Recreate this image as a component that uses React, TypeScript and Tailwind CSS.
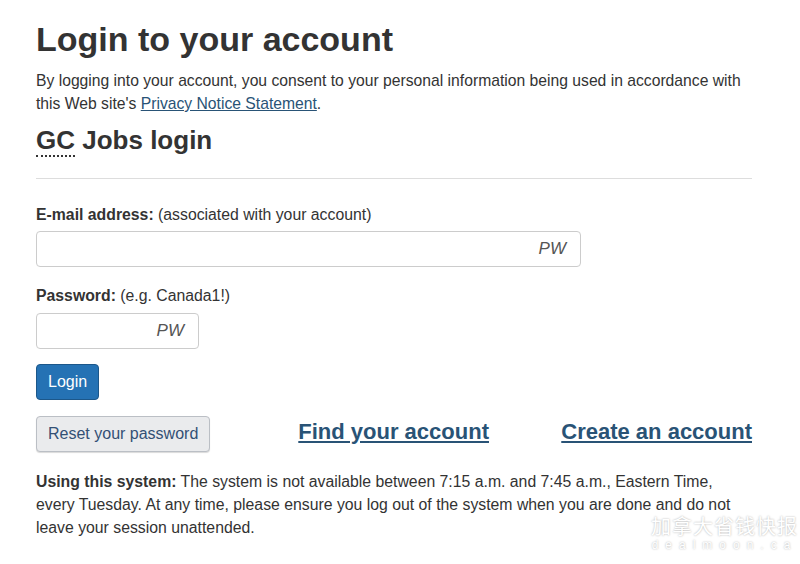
export default function App() {
  return (
    <div className="relative min-h-[564px] bg-white font-['Liberation_Sans',Arial,sans-serif] text-[#333]">
      <div className="w-[752px] pl-[36px] pt-[18px]">
        <h1 className="text-[34px] font-bold leading-[42px] text-[#333]">Login to your account</h1>
        <p className="mt-[9px] text-[15.7px] leading-[23px]">
          By logging into your account, you consent to your personal information being used in accordance with
          this Web site's{" "}
          <a href="#" className="text-[#295376] underline">
            Privacy Notice Statement
          </a>
          .
        </p>
        <h2 className="mt-[8px] text-[26px] font-bold leading-[34px]">
          <abbr className="border-b-2 border-dotted border-[#333] no-underline" title="Government of Canada">
            GC
          </abbr>{" "}
          Jobs login
        </h2>
        <hr className="mt-[21px] border-t border-[#ddd]" />

        <label className="mt-[24px] block text-[15.8px] leading-[23px]">
          <span className="font-bold">E-mail address:</span> (associated with your account)
        </label>
        <div className="mt-[5px] flex h-[36px] w-[545px] items-center justify-end rounded border border-[#ccc] pr-[14px]">
          <span className="text-[17px] italic text-[#555]">PW</span>
        </div>

        <label className="mt-[17px] block text-[15.8px] leading-[23px]">
          <span className="font-bold">Password:</span> (e.g. Canada1!)
        </label>
        <div className="mt-[6px] flex h-[36px] w-[163px] items-center justify-end rounded border border-[#ccc] pr-[14px]">
          <span className="text-[17px] italic text-[#555]">PW</span>
        </div>

        <button className="mt-[15px] block h-[36px] rounded border border-[#1c578a] bg-[#2572b4] px-[11px] text-[16px] text-white">
          Login
        </button>

        <div className="mt-[16px] flex items-center">
          <button className="h-[36px] rounded border border-[#bbbfc5] bg-[#eaebed] px-[11px] text-[16px] text-[#335075] shadow-[0_1px_1px_rgba(0,0,0,0.15)]">
            Reset your password
          </button>
          <a href="#" className="mb-[4px] ml-[88px] text-[22px] font-bold leading-[30px] text-[#295376] underline">
            Find your account
          </a>
          <a href="#" className="mb-[4px] ml-auto text-[22px] font-bold leading-[30px] text-[#295376] underline">
            Create an account
          </a>
        </div>

        <p className="mt-[18px] text-[15.8px] leading-[23px]">
          <strong>Using this system:</strong> The system is not available between 7:15 a.m. and 7:45 a.m., Eastern Time,
          every Tuesday. At any time, please ensure you log out of the system when you are done and do not
          leave your session unattended.
        </p>
      </div>

      <div className="absolute right-[2px] top-[514px] flex flex-col items-center text-white [text-shadow:0_0_2px_#aaa]">
        <span className="font-['Noto_Sans_CJK_SC',sans-serif] text-[20px] leading-[24px] tracking-[1px]">加拿大省钱快报</span>
        <span className="text-[12px] leading-[14px] tracking-[7px]">dealmoon.ca</span>
      </div>
    </div>
  );
}
